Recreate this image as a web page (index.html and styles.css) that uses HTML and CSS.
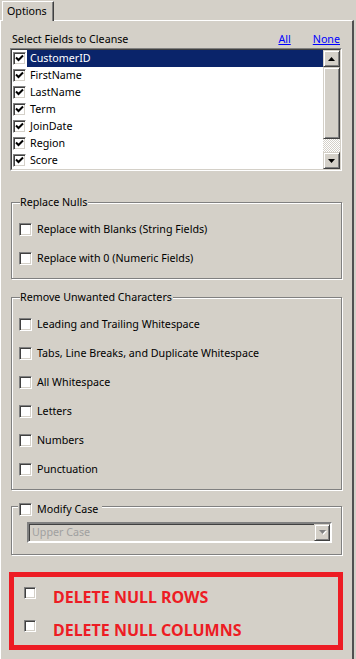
FILE: index.html
```html
<!DOCTYPE html>
<html lang="en">
<head>
  <meta charset="UTF-8" />
  <title>Data Cleansing - Options</title>
  <link rel="stylesheet" href="styles.css">
</head>
<body>

  <div class="tabstrip">
    <div class="tab">Options</div>
  </div>

  <div class="panel">
    <div class="fields-head">
      <span>Select Fields to Cleanse</span>
      <span class="links"><a href="#">All</a><a href="#">None</a></span>
    </div>

    <div class="listbox">
      <div class="listbox-inner">
        <ul class="field-list">
          <li class="selected"><span class="check"><svg width="9" height="9" viewBox="0 0 9 9"><path d="M1 3.5 L3.5 6 L8 1.5" /></svg></span><span class="name">CustomerID</span></li>
          <li><span class="check"><svg width="9" height="9" viewBox="0 0 9 9"><path d="M1 3.5 L3.5 6 L8 1.5" /></svg></span><span class="name">FirstName</span></li>
          <li><span class="check"><svg width="9" height="9" viewBox="0 0 9 9"><path d="M1 3.5 L3.5 6 L8 1.5" /></svg></span><span class="name">LastName</span></li>
          <li><span class="check"><svg width="9" height="9" viewBox="0 0 9 9"><path d="M1 3.5 L3.5 6 L8 1.5" /></svg></span><span class="name">Term</span></li>
          <li><span class="check"><svg width="9" height="9" viewBox="0 0 9 9"><path d="M1 3.5 L3.5 6 L8 1.5" /></svg></span><span class="name">JoinDate</span></li>
          <li><span class="check"><svg width="9" height="9" viewBox="0 0 9 9"><path d="M1 3.5 L3.5 6 L8 1.5" /></svg></span><span class="name">Region</span></li>
          <li><span class="check"><svg width="9" height="9" viewBox="0 0 9 9"><path d="M1 3.5 L3.5 6 L8 1.5" /></svg></span><span class="name">Score</span></li>
        </ul>
        <div class="vscroll">
          <div class="sb-btn"><svg width="7" height="4" viewBox="0 0 7 4"><path d="M3.5 0 L7 4 L0 4 Z" /></svg></div>
          <div class="sb-thumb"></div>
          <div class="sb-track"></div>
          <div class="sb-btn"><svg width="7" height="4" viewBox="0 0 7 4"><path d="M0 0 L7 0 L3.5 4 Z" /></svg></div>
        </div>
      </div>
    </div>

    <fieldset class="group group-nulls">
      <legend>Replace Nulls</legend>
      <div class="group-body">
        <label class="option"><span class="box"></span>Replace with Blanks (String Fields)</label>
        <label class="option"><span class="box"></span>Replace with 0 (Numeric Fields)</label>
      </div>
    </fieldset>

    <fieldset class="group group-chars">
      <legend>Remove Unwanted Characters</legend>
      <div class="group-body">
        <label class="option"><span class="box"></span>Leading and Trailing Whitespace</label>
        <label class="option"><span class="box"></span>Tabs, Line Breaks, and Duplicate Whitespace</label>
        <label class="option"><span class="box"></span>All Whitespace</label>
        <label class="option"><span class="box"></span>Letters</label>
        <label class="option"><span class="box"></span>Numbers</label>
        <label class="option"><span class="box"></span>Punctuation</label>
      </div>
    </fieldset>

    <fieldset class="group group-case">
      <legend><label class="option"><span class="box"></span>Modify Case</label></legend>
      <div class="group-body">
        <div class="combo">
          <span class="combo-text">Upper Case</span>
          <span class="combo-btn"><svg width="7" height="5" viewBox="0 0 7 5"><path class="tri-hi" d="M1 1 L8 1 L4.5 5 Z" /><path d="M0 0 L7 0 L3.5 4 Z" /></svg></span>
        </div>
      </div>
    </fieldset>

    <div class="danger">
      <label class="danger-row"><span class="box small"></span>DELETE NULL ROWS</label>
      <label class="danger-row"><span class="box small"></span>DELETE NULL COLUMNS</label>
    </div>
  </div>

</body>
</html>
```

FILE: styles.css
```css
* {
  box-sizing: border-box;
  margin: 0;
  padding: 0;
}

body {
  width: 356px;
  height: 659px;
  overflow: hidden;
  background-color: #d4d0c8;
  font-family: "Noto Sans", "DejaVu Sans", sans-serif;
  font-size: 10.7px;
  line-height: 15px;
  color: #000;
}

/* tab */
.tabstrip {
  height: 20px;
  padding-left: 2px;
  display: flex;
  align-items: flex-end;
}

.tab {
  position: relative;
  height: 20px;
  margin-bottom: -1px;
  padding: 2px 6px 0 4px;
  background-color: #d4d0c8;
  border-top: 1px solid #fff;
  border-left: 1px solid #fff;
  border-right: 1px solid #404040;
  box-shadow: inset -1px 0 0 #808080;
}

.panel {
  width: 354px;
  height: 639px;
  border-top: 1px solid #fff;
  border-left: 1px solid #fff;
  border-right: 2px solid #505050;
  padding: 0 10px 0 9px;
}

/* field list */
.fields-head {
  display: flex;
  justify-content: space-between;
  margin-top: 11px;
  height: 15px;
  padding-left: 2px;
}

.links a {
  color: #0000ff;
  text-decoration: underline;
  margin-left: 22px;
}

.links {
  padding-right: 2px;
}

.listbox {
  margin-top: 1px;
  height: 123px;
  border: 1px solid;
  border-color: #808080 #fff #fff #808080;
}

.listbox-inner {
  height: 121px;
  display: flex;
  background-color: #fff;
  border: 1px solid;
  border-color: #404040 #d4d0c8 #d4d0c8 #404040;
}

.field-list {
  list-style: none;
  flex: 1;
}

.field-list li {
  height: 17px;
  display: flex;
  align-items: center;
  padding-left: 1px;
}

.field-list .name {
  flex: 1;
  height: 17px;
  margin-left: 1px;
  padding-left: 3px;
  line-height: 17px;
}

.field-list li.selected .name {
  background-color: #0a246a;
  color: #fff;
}

.check {
  width: 13px;
  height: 13px;
  display: flex;
  align-items: center;
  justify-content: center;
  background-color: #fff;
  border: 1px solid;
  border-color: #808080 #fff #fff #808080;
  box-shadow: inset 1px 1px 0 #404040, inset -1px -1px 0 #d4d0c8;
}

.check path {
  fill: none;
  stroke: #000;
  stroke-width: 2;
}

/* scrollbar */
.vscroll {
  width: 17px;
  display: flex;
  flex-direction: column;
}

.sb-btn,
.sb-thumb {
  background-color: #d4d0c8;
  border: 1px solid;
  border-color: #d4d0c8 #404040 #404040 #d4d0c8;
  box-shadow: inset 1px 1px 0 #fff, inset -1px -1px 0 #808080;
}

.sb-btn {
  height: 17px;
  display: flex;
  align-items: center;
  justify-content: center;
}

.sb-btn path {
  fill: #000;
}

.sb-thumb {
  height: 72px;
}

.sb-track {
  flex: 1;
  background-color: #d4d0c8;
  background-image: conic-gradient(#fff 25%, #d4d0c8 0 50%, #fff 0 75%, #d4d0c8 0);
  background-size: 2px 2px;
}

/* group boxes */
.group {
  border: 1px solid #808080;
  box-shadow: inset 1px 1px 0 #fff, 1px 1px 0 #fff;
  padding: 0;
  margin-left: 1px;
}

.group legend {
  margin-left: 8px;
  padding: 0 1px 0 0;
  background-color: #d4d0c8;
  line-height: 15px;
}

.group-nulls {
  margin-top: 24px;
}

.group-chars {
  margin-top: 11px;
}

.group-case {
  margin-top: 6px;
}

.group-case legend {
  margin-left: 6px;
  padding: 6px 4px 0 1px;
}

.group-body {
  padding: 5px 0 5px 7px;
}

.group-case .group-body {
  padding: 5px 9px 11px 15px;
}

.option {
  display: flex;
  align-items: center;
  height: 29px;
}

.group-case .option {
  height: 15px;
}

.box {
  width: 13px;
  height: 13px;
  margin-right: 5px;
  background-color: #fff;
  border: 1px solid;
  border-color: #808080 #fff #fff #808080;
  box-shadow: inset 1px 1px 0 #404040, inset -1px -1px 0 #d4d0c8;
}

/* combo */
.combo {
  height: 21px;
  display: flex;
  align-items: center;
  justify-content: space-between;
  border: 2px solid;
  border-color: #808080 #fff #fff #808080;
  box-shadow: inset 1px 1px 0 #404040;
  padding-left: 3px;
}

.combo-text {
  color: #a0a0a0;
}

.combo-btn {
  width: 16px;
  height: 17px;
  display: flex;
  align-items: center;
  justify-content: center;
  border: 1px solid;
  border-color: #d4d0c8 #404040 #404040 #d4d0c8;
  box-shadow: inset 1px 1px 0 #fff, inset -1px -1px 0 #808080;
}

.combo-btn svg {
  overflow: visible;
}

.combo-btn path {
  fill: #808080;
}

.combo-btn path.tri-hi {
  fill: #fff;
}

/* delete box */
.danger {
  margin: 17px -1px 0 -1px;
  height: 78px;
  border: 5px solid #ed1c24;
  padding: 5px 0 0 10px;
  display: flex;
  flex-direction: column;
  gap: 3px;
}

.danger-row {
  height: 30px;
  display: flex;
  align-items: center;
  color: #ed1c24;
  font-size: 16px;
  font-weight: bold;
}

.box.small {
  width: 12px;
  height: 12px;
  margin: 0 17px 8px 0;
}
```
